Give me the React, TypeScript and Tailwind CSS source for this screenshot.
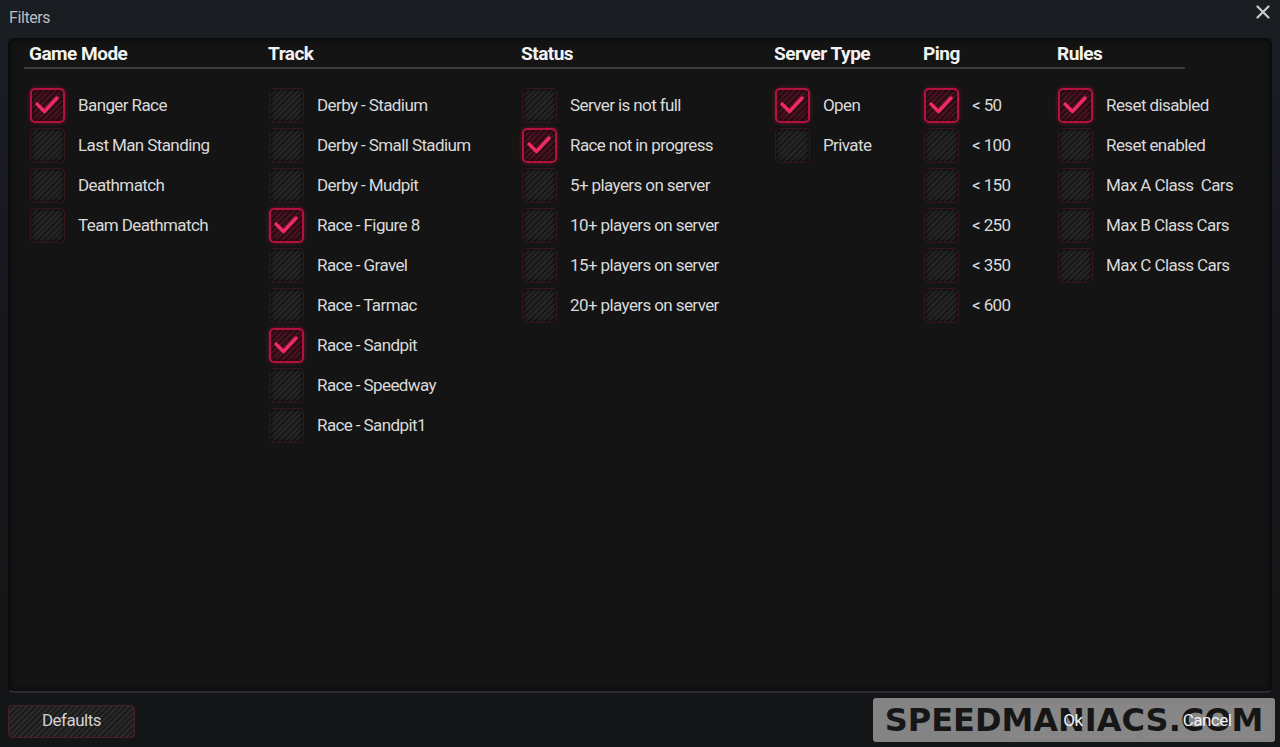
import React from 'react';

type Item = { label: string; on?: boolean };
type Column = { title: string; width: string; items: Item[] };

const columns: Column[] = [
  {
    title: 'Game Mode',
    width: 'w-[239px]',
    items: [
      { label: 'Banger Race', on: true },
      { label: 'Last Man Standing' },
      { label: 'Deathmatch' },
      { label: 'Team Deathmatch' },
    ],
  },
  {
    title: 'Track',
    width: 'w-[253px]',
    items: [
      { label: 'Derby - Stadium' },
      { label: 'Derby - Small Stadium' },
      { label: 'Derby - Mudpit' },
      { label: 'Race - Figure 8', on: true },
      { label: 'Race - Gravel' },
      { label: 'Race - Tarmac' },
      { label: 'Race - Sandpit', on: true },
      { label: 'Race - Speedway' },
      { label: 'Race - Sandpit1' },
    ],
  },
  {
    title: 'Status',
    width: 'w-[253px]',
    items: [
      { label: 'Server is not full' },
      { label: 'Race not in progress', on: true },
      { label: '5+ players on server' },
      { label: '10+ players on server' },
      { label: '15+ players on server' },
      { label: '20+ players on server' },
    ],
  },
  {
    title: 'Server Type',
    width: 'w-[149px]',
    items: [{ label: 'Open', on: true }, { label: 'Private' }],
  },
  {
    title: 'Ping',
    width: 'w-[134px]',
    items: [
      { label: '< 50', on: true },
      { label: '< 100' },
      { label: '< 150' },
      { label: '< 250' },
      { label: '< 350' },
      { label: '< 600' },
    ],
  },
  {
    title: 'Rules',
    width: 'w-[128px]',
    items: [
      { label: 'Reset disabled', on: true },
      { label: 'Reset enabled' },
      { label: 'Max A Class  Cars' },
      { label: 'Max B Class Cars' },
      { label: 'Max C Class Cars' },
    ],
  },
];

const hatch =
  'bg-[repeating-linear-gradient(135deg,#2a2a2a_0px,#2a2a2a_2px,#1b1b1b_2px,#1b1b1b_4px)]';

function Box({ on }: { on?: boolean }) {
  if (on) {
    return (
      <div className="w-[35px] h-[35px] shrink-0 rounded-[5px] border-2 border-[#b3123f] bg-[repeating-linear-gradient(135deg,#4a1322_0px,#4a1322_2px,#2a0c15_2px,#2a0c15_4px)] shadow-[0_0_4px_rgba(200,20,70,0.5),inset_0_0_4px_rgba(0,0,0,0.6)] flex items-center justify-center">
        <svg width="31" height="31" viewBox="0 0 31 31">
          <path d="M5 14 L12.5 21.5 L25 8" fill="none" stroke="#f02a62" strokeWidth="3.4" strokeLinecap="round" strokeLinejoin="round" />
        </svg>
      </div>
    );
  }
  return (
    <div className="w-[35px] h-[35px] shrink-0 rounded-[5px] border border-[#38161f] bg-[repeating-linear-gradient(135deg,#262626_0px,#262626_2px,#181818_2px,#181818_4px)] shadow-[inset_0_0_5px_rgba(0,0,0,0.8)]" />
  );
}

export default function App() {
  return (
    <div
      className="w-[1280px] h-[747px] overflow-hidden relative bg-[linear-gradient(180deg,#1a1e23_0%,#16181c_40%,#141517_100%)] flex flex-col text-[#dcdcdc]"
      style={{ fontFamily: 'Roboto, "Liberation Sans", sans-serif' }}
    >
      {/* title bar */}
      <div className="h-[38px] flex items-center justify-between pl-[9px] pr-[10px]">
        <span className="text-[16px] tracking-[-0.4px] text-[#b9bcc0] -mt-[2px]">Filters</span>
        <svg width="14" height="14" viewBox="0 0 14 14" className="-mt-[14px]">
          <path d="M1.5 1.5 L12.5 12.5 M12.5 1.5 L1.5 12.5" stroke="#c8cacc" strokeWidth="2.2" strokeLinecap="round" />
        </svg>
      </div>

      {/* main panel */}
      <div className="mx-[8px] h-[655px] rounded-[6px] bg-[#141414] border border-[#0b0b0b] shadow-[inset_0_0_6px_rgba(0,0,0,0.7)] border-b-2 border-b-[#2b2d30]">
        <div className="ml-[15px] w-[1161px] h-[30px] border-b-2 border-[#3b3b3b] flex pl-[5px] pt-[4px]">
          {columns.map((c) => (
            <div
              key={c.title}
              className={`${c.width} shrink-0 text-[19px] tracking-[-0.5px] font-bold text-[#f2f2f2] leading-[22px]`}
            >
              {c.title}
            </div>
          ))}
        </div>
        <div className="flex pl-[21px] pt-[19px]">
          {columns.map((c) => (
            <div key={c.title} className={`${c.width} shrink-0 flex flex-col gap-[5px]`}>
              {c.items.map((it) => (
                <div key={it.label} className="flex items-center h-[35px]">
                  <Box on={it.on} />
                  <span className="ml-[13px] text-[17px] tracking-[-0.6px] text-[#dadada] whitespace-pre">
                    {it.label}
                  </span>
                </div>
              ))}
            </div>
          ))}
        </div>
      </div>

      {/* bottom bar */}
      <div className="flex-1 flex items-center justify-between px-[8px] pt-[2px]">
        <button className={`w-[127px] h-[33px] rounded-[4px] border border-[#4a1d2b] ${hatch} text-[17px] tracking-[-0.5px] text-[#d2d2d2]`}>
          Defaults
        </button>
        <div className="flex gap-[4px]">
          <button className={`w-[130px] h-[33px] rounded-[4px] border border-[#4a1d2b] ${hatch} text-[17px] tracking-[-0.5px] text-[#f0f0f0]`}>
            <span className="relative z-20">Ok</span>
          </button>
          <button className={`w-[130px] h-[33px] rounded-[4px] border border-[#4a1d2b] ${hatch} text-[17px] tracking-[-0.5px] text-[#f0f0f0]`}>
            <span className="relative z-20">Cancel</span>
          </button>
        </div>
      </div>

      {/* watermark */}
      <div className="absolute left-[873px] top-[698px] w-[402px] h-[44px] rounded-[3px] bg-[rgba(160,160,160,0.8)] flex items-center justify-center z-10">
        <span
          className="text-[32px] font-bold text-[#161616] tracking-[0px] leading-none"
          style={{ fontFamily: '"DejaVu Sans", sans-serif' }}
        >
          SPEEDMANIACS.COM
        </span>
      </div>
    </div>
  );
}
